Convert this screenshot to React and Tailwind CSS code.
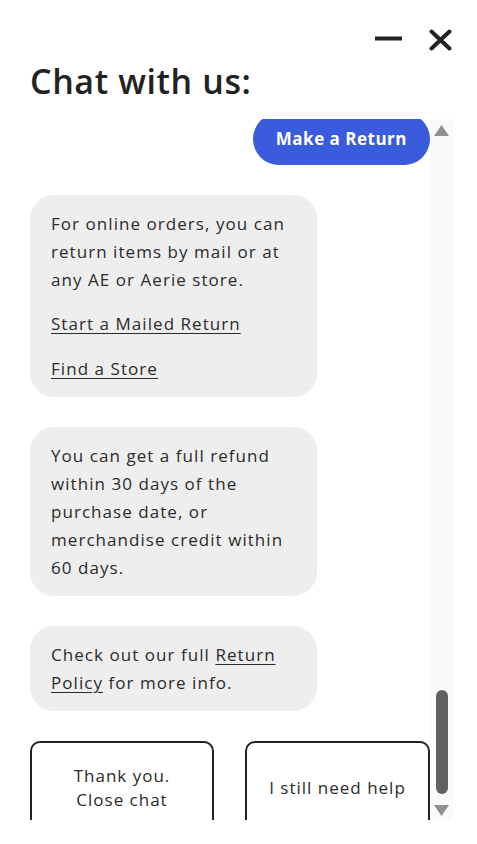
const Bubble = ({ children, className = "" }) => (
  <div
    className={`w-[287px] rounded-[24px] bg-[#eeeeee] pl-[21px] pr-[14px] pt-[15px] pb-[14px] text-[17px] font-medium leading-[28px] tracking-[1.05px] text-[#2b2b2b] ${className}`}
  >
    {children}
  </div>
);

const App = () => {
  return (
    <div
      className="w-[477px] h-[844px] bg-white overflow-hidden"
      style={{ fontFamily: "'Open Sans', Lato, sans-serif" }}
    >
      {/* header */}
      <div className="flex justify-end items-start gap-[27px] pr-[25px] pt-[29px] h-[54px]">
        <svg width="27" height="22" viewBox="0 0 27 22">
          <rect x="0" y="7.5" width="27" height="4" fill="#222" />
        </svg>
        <svg width="23" height="22" viewBox="0 0 23 22">
          <path d="M2.5 2.5 L20.5 19.5 M20.5 2.5 L2.5 19.5" stroke="#222" strokeWidth="4" strokeLinecap="round" />
        </svg>
      </div>

      <h1 className="pl-[30px] text-[34px] font-semibold leading-[50px] tracking-[0.6px] text-[#222] mt-[2px]">
        Chat with us:
      </h1>

      {/* scroll area */}
      <div className="mt-[13px] flex h-[701px] pl-[30px]">
        <div className="w-[400px] h-full overflow-hidden">
          <div className="-mt-[6px] flex flex-col gap-[30px]">
            <div className="flex justify-end">
              <div className="rounded-full bg-[#3a5bdc] px-[23px] h-[52px] flex items-center text-[17px] font-bold tracking-[0.5px] text-white">
                Make a Return
              </div>
            </div>

            <Bubble>
              <p>For online orders, you can return items by mail or at any AE or Aerie store.</p>
              <p className="mt-[16px] underline underline-offset-[3px]">Start a Mailed Return</p>
              <p className="mt-[17px] underline underline-offset-[3px]">Find a Store</p>
            </Bubble>

            <Bubble>
              You can get a full refund within 30 days of the purchase date, or
              merchandise credit within 60 days.
            </Bubble>

            <Bubble>
              Check out our full{" "}
              <span className="underline underline-offset-[3px]">Return Policy</span>{" "}
              for more info.
            </Bubble>

            <div className="flex justify-between">
              <button className="w-[184px] h-[94px] rounded-[10px] border-2 border-[#222] text-[17px] font-medium leading-[24px] tracking-[1px] text-[#2b2b2b]">
                Thank you.
                <br />
                Close chat
              </button>
              <button className="w-[185px] h-[94px] rounded-[10px] border-2 border-[#222] text-[17px] font-medium leading-[24px] tracking-[1px] text-[#2b2b2b]">
                I still need help
              </button>
            </div>
          </div>
        </div>

        {/* scrollbar */}
        <div className="w-[23px] h-full bg-[#fafafa] flex flex-col items-center pt-[6px] pb-[4px]">
          <svg width="15" height="11" viewBox="0 0 15 11">
            <path d="M7.5 0 L15 11 L0 11 Z" fill="#8f8f8f" />
          </svg>
          <div className="flex-1" />
          <div className="w-[12px] h-[104px] rounded-full bg-[#616161]" />
          <svg width="15" height="11" viewBox="0 0 15 11" className="mt-[11px]">
            <path d="M0 0 L15 0 L7.5 11 Z" fill="#8f8f8f" />
          </svg>
        </div>
      </div>
    </div>
  );
};

export default App;
